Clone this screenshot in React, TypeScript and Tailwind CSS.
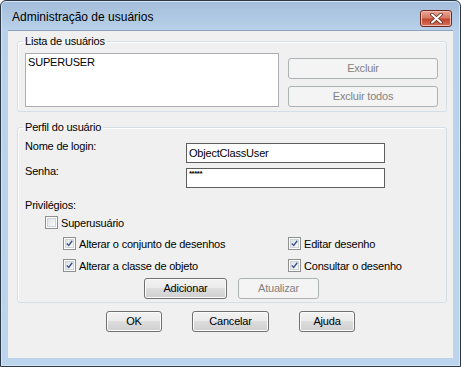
import React from "react";

type CheckProps = {
  label: string;
  checked?: boolean;
};

function Check({ label, checked = false }: CheckProps) {
  return (
    <label className="flex h-[13px] items-center gap-[3px]">
      <span className="flex h-[13px] w-[13px] shrink-0 items-center justify-center border border-[#8e8f8f] bg-white p-px">
        <span className="flex h-full w-full items-center justify-center border border-[#cfd3d8] bg-gradient-to-br from-[#dfe2e6] to-[#fafafa]">
          {checked ? (
            <svg width="9" height="9" viewBox="0 0 9 9">
              <path
                d="M1 4.5 L3.5 7 L8 1"
                fill="none"
                stroke="#3b5492"
                strokeWidth="1.8"
              />
            </svg>
          ) : null}
        </span>
      </span>
      <span className="leading-[14px]">{label}</span>
    </label>
  );
}

type ButtonProps = {
  children: React.ReactNode;
  width: string;
  disabled?: boolean;
};

function Button({ children, width, disabled = false }: ButtonProps) {
  if (disabled) {
    return (
      <button
        className={`${width} flex h-[21px] items-center justify-center rounded-[3px] border border-[#adb2b5] bg-[#f4f4f4] text-[#838383]`}
        disabled
        type="button"
      >
        {children}
      </button>
    );
  }

  return (
    <button
      className={`${width} flex h-[21px] items-center justify-center rounded-[3px] border border-[#707070] bg-[linear-gradient(#f2f2f2_0%,#ebebeb_45%,#dddddd_50%,#cfcfcf_100%)] text-black shadow-[inset_0_0_0_1px_#fcfcfc]`}
      type="button"
    >
      {children}
    </button>
  );
}

export default function App() {
  return (
    <div className="h-[367px] w-[461px] overflow-hidden bg-white font-['Liberation_Sans',Arial,sans-serif] text-[11px] text-black">
      <div className="flex h-full w-full flex-col rounded-t-[6px] border border-[#2d3847] bg-[linear-gradient(#a3bddb_0px,#b9d1ea_30px,#bcd4ec_100%)] shadow-[inset_0_0_0_1px_#d6e5f5]">
        {/* title bar */}
        <div className="flex h-[29px] shrink-0 items-start justify-between pl-[11px] pr-[8px]">
          <span className="mt-[9px] text-[12px] leading-[15px]">
            Administração de usuários
          </span>
          <span className="mt-[9px] flex h-[17px] w-[32px] items-center justify-center rounded-[3px] border border-[#6f2a1f] bg-[linear-gradient(#e8a595_0%,#d87a66_45%,#c4462f_55%,#d7715c_100%)] shadow-[inset_0_0_0_1px_#eebcb0]">
            <svg width="13" height="11" viewBox="0 0 13 11">
              <path
                d="M2 1.5 L11 9.5 M11 1.5 L2 9.5"
                stroke="#5a2a22"
                strokeWidth="3.6"
                strokeLinecap="round"
              />
              <path
                d="M2 1.5 L11 9.5 M11 1.5 L2 9.5"
                stroke="#ffffff"
                strokeWidth="2"
                strokeLinecap="round"
              />
            </svg>
          </span>
        </div>

        {/* client area */}
        <div className="mx-[7px] flex h-[328px] flex-col border-t border-[#8ea4bd] bg-[#f0f0f0] pl-[9px] pr-[6px] pt-[3px] tracking-[-0.2px]">
          <fieldset className="rounded-[3px] border border-[#d5dfe5] pb-[4px] pl-[7px] pr-[8px] shadow-[inset_1px_1px_0_#ffffff]">
            <legend className="-ml-[2px] px-[2px] leading-[14px]">
              Lista de usuários
            </legend>
            <div className="mt-[5px] flex items-start justify-between">
              <div className="h-[54px] w-[254px] border border-[#abadb3] bg-white px-[2px] pt-px leading-[14px]">
                SUPERUSER
              </div>
              <div className="mt-[5px] flex flex-col gap-[7px]">
                <Button width="w-[150px]" disabled>
                  Excluir
                </Button>
                <Button width="w-[150px]" disabled>
                  Excluir todos
                </Button>
              </div>
            </div>
          </fieldset>

          <fieldset className="mt-[8px] rounded-[3px] border border-[#d5dfe5] pb-[3px] pl-[7px] pr-[8px] shadow-[inset_1px_1px_0_#ffffff]">
            <legend className="-ml-[2px] px-[2px] leading-[14px]">
              Perfil do usuário
            </legend>

            <div className="mt-[9px] flex items-start">
              <span className="-mt-[4px] w-[161px] leading-[14px]">
                Nome de login:
              </span>
              <div className="flex h-[20px] w-[199px] items-center border border-[#5e5e5e] bg-white px-[2px]">
                ObjectClassUser
              </div>
            </div>

            <div className="mt-[5px] flex items-start">
              <span className="-mt-[4px] w-[161px] leading-[14px]">
                Senha:
              </span>
              <div className="flex h-[20px] w-[199px] items-start border border-[#5e5e5e] bg-white px-[2px] pt-[1px] text-[8px] font-bold leading-[8px] tracking-[-0.5px]">
                *****
              </div>
            </div>

            <div className="mt-[10px] leading-[14px]">Privilégios:</div>

            <div className="ml-[20px] mt-[4px]">
              <Check label="Superusuário" />
            </div>

            <div className="ml-[38px] mt-[8px] grid grid-cols-[225px_1fr] gap-y-[9px]">
              <Check label="Alterar o conjunto de desenhos" checked />
              <Check label="Editar desenho" checked />
              <Check label="Alterar a classe de objeto" checked />
              <Check label="Consultar o desenho" checked />
            </div>

            <div className="mt-[6px] flex justify-center gap-[11px]">
              <Button width="w-[83px]">Adicionar</Button>
              <Button width="w-[81px]" disabled>
                Atualizar
              </Button>
            </div>
          </fieldset>

          <div className="mt-[8px] flex justify-center gap-[30px] pr-[3px]">
            <Button width="w-[56px]">OK</Button>
            <Button width="w-[77px]">Cancelar</Button>
            <Button width="w-[56px]">Ajuda</Button>
          </div>
        </div>
      </div>
    </div>
  );
}
